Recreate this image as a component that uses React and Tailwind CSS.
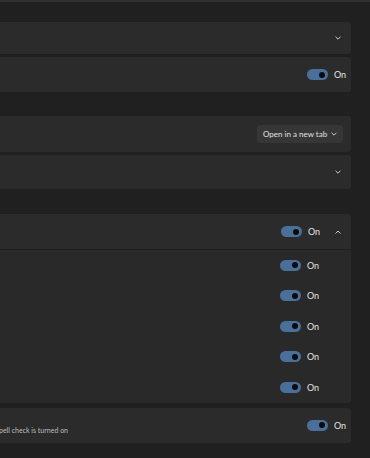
import React from "react"

const font = { fontFamily: 'Lato, "Noto Sans", sans-serif' }

function Toggle() {
  return (
    <div className="flex items-center">
      <div className="w-[21px] h-[11px] rounded-full bg-[#4a6f9b] flex items-center justify-end pr-[3px]">
        <div className="w-[6px] h-[6px] rounded-full bg-[#0b0b0b]" />
      </div>
      <span className="ml-[6px] w-[10px] text-[9px] text-[#e2e2e2] leading-none">On</span>
    </div>
  )
}

function Chevron({ up }) {
  return (
    <svg width="8" height="8" viewBox="0 0 8 8" className="text-[#cfcfcf] shrink-0">
      <path
        d={up ? "M1.8 5.2 L4 3 L6.2 5.2" : "M1.8 3 L4 5.2 L6.2 3"}
        fill="none"
        stroke="currentColor"
        strokeWidth="1"
        strokeLinecap="round"
        strokeLinejoin="round"
      />
    </svg>
  )
}

export default function App() {
  return (
    <div className="w-[370px] h-[458px] bg-[#202020] overflow-hidden" style={font}>
      <div className="h-[2px] bg-[#2f2f2f]" />

      <div className="pt-[20px] pr-[19px] flex flex-col">
        {/* first group */}
        <div className="h-[32px] bg-[#2b2b2b] rounded-r-[3px] flex items-center justify-end pr-[9px]">
          <Chevron />
        </div>
        <div className="mt-[3px] h-[35px] bg-[#2b2b2b] rounded-r-[3px] flex items-center justify-end pr-[7px]">
          <Toggle />
        </div>

        {/* second group */}
        <div className="mt-[24px] h-[36px] bg-[#2b2b2b] rounded-r-[3px] flex items-center justify-end pr-[8px]">
          <button className="h-[18px] w-[86px] rounded-[3px] bg-[#363636] flex items-center pl-[6px] pr-[5px] text-[8px] text-[#e2e2e2] whitespace-nowrap">
            <span className="flex-1 text-left">Open in a new tab</span>
            <Chevron />
          </button>
        </div>
        <div className="mt-[3px] h-[34px] bg-[#2b2b2b] rounded-r-[3px] flex items-center justify-end pr-[9px]">
          <Chevron />
        </div>

        {/* expander */}
        <div className="mt-[25px] h-[35px] bg-[#2b2b2b] rounded-tr-[3px] flex items-center justify-end pr-[9px]">
          <Toggle />
          <div className="ml-[16px]">
            <Chevron up />
          </div>
        </div>
        <div className="mt-px bg-[#292929] rounded-br-[3px] flex flex-col pr-[34px]">
          {[0, 1, 2, 3, 4].map((i) => (
            <div key={i} className="h-[30.5px] flex items-center justify-end">
              <Toggle />
            </div>
          ))}
        </div>

        <div className="mt-[5px] h-[35px] bg-[#2b2b2b] rounded-r-[3px] flex items-center justify-between pr-[7px]">
          <span className="text-[7px] text-[#bdbdbd] mt-[10px] -ml-[1px]">pell check is turned on</span>
          <Toggle />
        </div>
      </div>
    </div>
  )
}
